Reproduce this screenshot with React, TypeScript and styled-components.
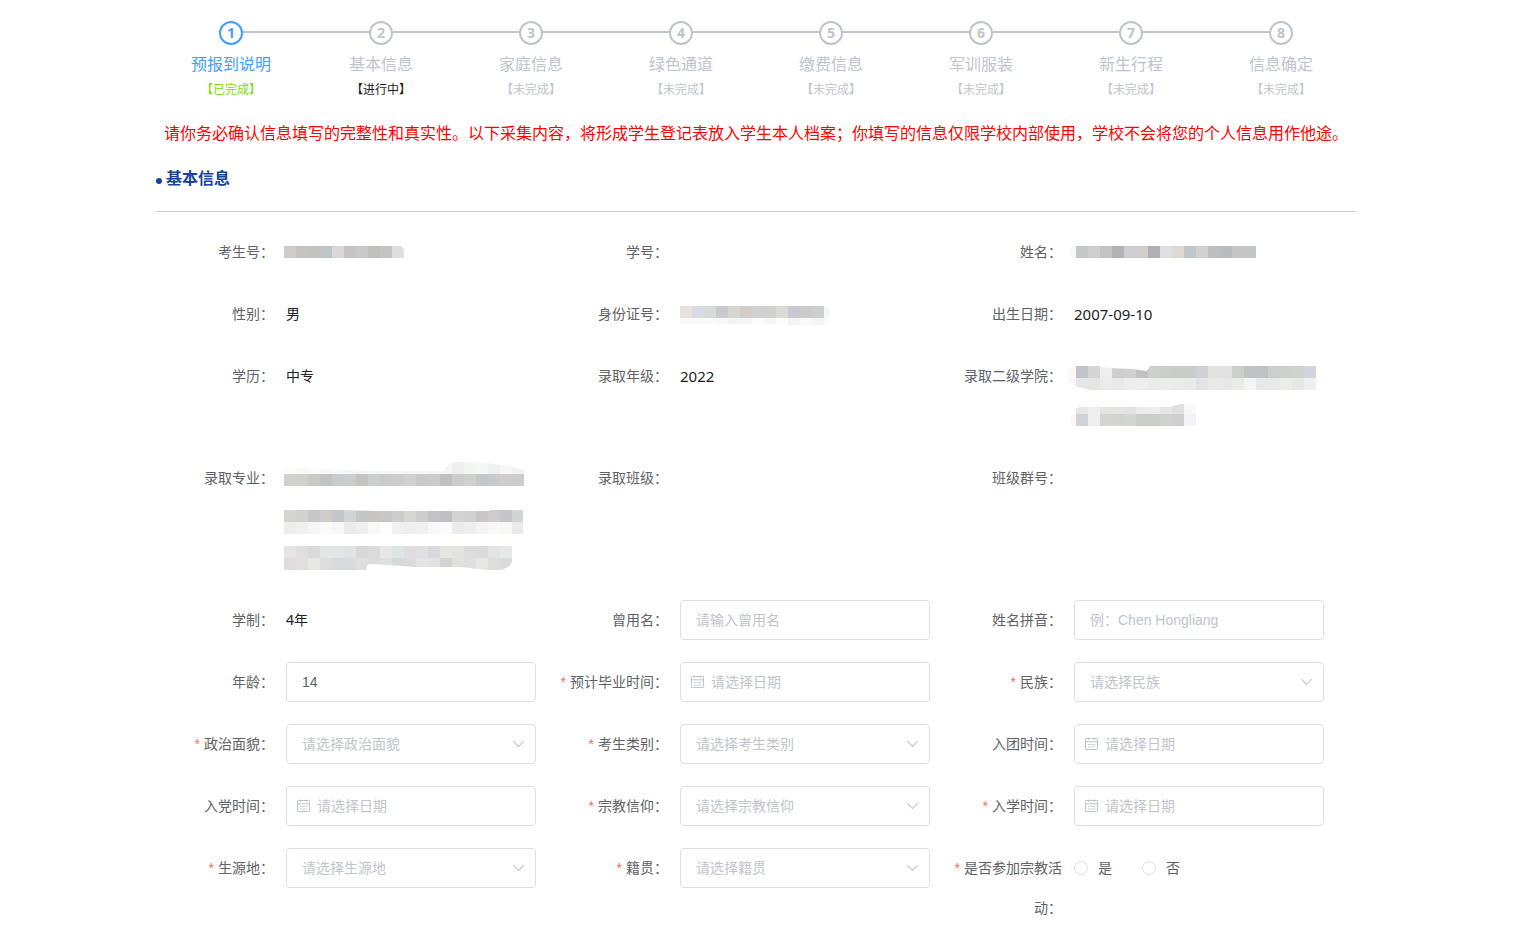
import React, { useId } from 'react';
import styled, { createGlobalStyle } from 'styled-components';

const GlobalStyle = createGlobalStyle`
  *, *::before, *::after { box-sizing: border-box; }
  body {
    margin: 0;
    background: #fff;
    color: #303133;
    font-family: 'Noto Sans', 'Noto Sans CJK SC', sans-serif;
    font-size: 14px;
  }
`;

const Page = styled.div`
  padding: 21px 16px 0 0;
`;

const Container = styled.main`
  max-width: 1200px;
  margin: 0 auto;
`;

/* ---------- steps ---------- */

type StepState = 'done' | 'active' | 'todo';

const titleColor = { done: '#409eff', active: '#c0c4cc', todo: '#c0c4cc' };
const statusColor = { done: '#7fdb0f', active: '#222222', todo: '#c0c4cc' };

const StepList = styled.ol`
  display: flex;
  margin: 0;
  padding: 0;
  list-style: none;
`;

const StepItem = styled.li`
  flex: 1;
  display: flex;
  flex-direction: column;
  align-items: center;
`;

const StepHead = styled.div`
  align-self: stretch;
  display: flex;
  align-items: center;
`;

const StepLine = styled.span<{ $hidden?: boolean }>`
  flex: 1;
  height: 2px;
  margin-bottom: 2px;
  background: ${(p) => (p.$hidden ? 'transparent' : '#c0c4cc')};
`;

const StepCircle = styled.span<{ $state: StepState }>`
  width: 24px;
  height: 24px;
  border: 2px solid;
  border-radius: 50%;
  color: ${(p) => titleColor[p.$state]};
  font-size: 14px;
  font-weight: 700;
  line-height: 20px;
  text-align: center;
`;

const StepTitle = styled.span<{ $state: StepState }>`
  color: ${(p) => titleColor[p.$state]};
  font-size: 16px;
  line-height: 38px;
`;

const StepStatus = styled.span<{ $state: StepState }>`
  color: ${(p) => statusColor[p.$state]};
  font-size: 12px;
  line-height: 14px;
`;

const steps: { title: string; status: string; state: StepState }[] = [
  { title: '预报到说明', status: '【已完成】', state: 'done' },
  { title: '基本信息', status: '【进行中】', state: 'active' },
  { title: '家庭信息', status: '【未完成】', state: 'todo' },
  { title: '绿色通道', status: '【未完成】', state: 'todo' },
  { title: '缴费信息', status: '【未完成】', state: 'todo' },
  { title: '军训服装', status: '【未完成】', state: 'todo' },
  { title: '新生行程', status: '【未完成】', state: 'todo' },
  { title: '信息确定', status: '【未完成】', state: 'todo' },
];

/* ---------- headings ---------- */

const Notice = styled.p`
  margin: 23px 0 0;
  color: #ff0000;
  font-family: 'Noto Sans CJK SC', sans-serif;
  font-size: 16px;
  line-height: 24px;
  text-align: center;
`;

const SectionTitle = styled.h2`
  display: flex;
  align-items: center;
  gap: 4px;
  margin: 22px 0 0;
  padding-bottom: 21px;
  border-bottom: 1px solid #d0d0d0;
  color: #17449b;
  font-size: 16px;
  font-weight: 700;
  line-height: 24px;

  &::before {
    content: '';
    width: 6px;
    height: 6px;
    margin-top: 5px;
    border-radius: 50%;
    background: #17449b;
  }
`;

/* ---------- form ---------- */

const Form = styled.form`
  display: grid;
  grid-template-columns: repeat(3, 1fr);
  row-gap: 22px;
  padding: 20px 8px 0 10px;
`;

const Item = styled.div`
  display: flex;
  align-items: flex-start;
  line-height: 40px;
`;

const labelText = `
  flex: none;
  width: 120px;
  padding-right: 12px;
  color: #606266;
  text-align: right;
`;

const Label = styled.label`${labelText}`;
const Caption = styled.span`${labelText}`;

const Star = styled.span`
  margin-right: 4px;
  color: #f56c6c;
  font-family: 'Liberation Sans', sans-serif;
`;

const Value = styled.span<{ $numeric?: boolean }>`
  color: #222;
  font-size: ${(p) => (p.$numeric ? 15 : 14)}px;
`;

const Field = styled.div`
  position: relative;
  flex: 0 1 250px;
  height: 40px;
`;

const control = `
  display: block;
  width: 100%;
  height: 40px;
  border: 1px solid #dcdfe6;
  border-radius: 4px;
  outline: none;
  background: #fff;
  font-family: 'Liberation Sans', 'Noto Sans CJK SC', sans-serif;
  font-size: 14px;
`;

const TextInput = styled.input<{ $icon?: boolean }>`
  ${control}
  padding: 0 15px 0 ${(p) => (p.$icon ? 30 : 15)}px;
  color: #606266;
  &::placeholder { color: #c0c4cc; opacity: 1; }
`;

const Select = styled.select`
  ${control}
  padding: 0 30px 0 15px;
  color: #c0c4cc;
  appearance: none;
`;

const Icon = styled.svg<{ $side: 'left' | 'right' }>`
  position: absolute;
  top: 13px;
  ${(p) => p.$side}: 10px;
  width: 14px;
  height: 14px;
  fill: none;
  stroke: #c0c4cc;
  pointer-events: none;
`;

const RadioGroup = styled.div`
  display: flex;
  gap: 30px;
`;

const RadioLabel = styled.label`
  display: flex;
  align-items: center;
  gap: 10px;
  color: #606266;
`;

const Radio = styled.input`
  width: 14px;
  height: 14px;
  margin: 0;
  border: 1px solid #dcdfe6;
  border-radius: 50%;
  appearance: none;
  &:checked { border: 4px solid #409eff; }
`;

const ChevronIcon = () => (
  <Icon $side="right" viewBox="0 0 14 14" aria-hidden="true">
    <path d="M1.3 4.2 6.5 9.4l5.2-5.2" strokeWidth="1.1" />
  </Icon>
);

const CalendarIcon = () => (
  <Icon $side="left" viewBox="0 0 14 14" aria-hidden="true">
    <rect x="1.5" y="1.5" width="12" height="11" rx="0.6" />
    <path d="M1.5 4.8h12M4.5 0.6v2.2M10.5 0.6v2.2" />
    <path d="M3.8 7.5h2M6.5 7.5h2M9.2 7.5h2M3.8 10h2M6.5 10h2M9.2 10h2" strokeWidth="0.9" />
  </Icon>
);

/* ---------- masked values ---------- */

const MaskSvg = styled.svg`
  display: block;
  flex: none;
  margin-left: -6px;
`;

interface Band {
  x: number;
  y: number;
  h?: number;
  colors: string;
}

interface Mask {
  height: number;
  outline: string;
  bands: Band[];
}

const CELL = 12;

const Mosaic = ({ mask }: { mask: Mask }) => {
  const id = useId();
  return (
    <MaskSvg width="256" height={mask.height} viewBox={`0 0 256 ${mask.height}`} role="img" aria-label="已隐藏">
      <clipPath id={id}>
        <path d={mask.outline} />
      </clipPath>
      <g clipPath={`url(#${id})`} shapeRendering="crispEdges">
        {mask.bands.map((band) =>
          band.colors.split(' ').map((c, i) => (
            <rect
              key={`${band.y}-${i}`}
              x={band.x + i * CELL}
              y={band.y}
              width={CELL}
              height={band.h ?? CELL}
              fill={`#${c}`}
            />
          )),
        )}
      </g>
    </MaskSvg>
  );
};

const masks: Record<string, Mask> = {
  examNo: {
    height: 40,
    outline: 'M4 14H121Q124 16 124 19V26H4Z',
    bands: [{ x: 4, y: 14, colors: 'd0cccc c3c3c0 c2c2c0 bfc5c5 d8d8d8 c5c3c4 c8cac9 c0bfbd c3c3c3 dedede' }],
  },
  idNo: {
    height: 40,
    outline: 'M6 12H152Q156 14 156 19Q156 28 149 31Q140 32 118 31L112 30H6Z',
    bands: [
      { x: 6, y: 12, colors: 'e7e2df d9dce5 d9dada cacaca d5d5d2 d2cdc9 cfd1d5 d0d0ce dadad8 c9cacf cbcbcb cdced1 f6f7f9' },
      { x: 6, y: 24, colors: 'fafafa f9f9f9 fafafa f8f8f8 f4f4f4 f5f5f5 fdfdfd f6f6f6 fdfdfd f4f4f4 fafafa f5f5f5 fbfbfb' },
    ],
  },
  name: {
    height: 40,
    outline: 'M8 14H188V26H4Q-1 20 4 14Z',
    bands: [
      { x: -4, y: 14, colors: 'f8f7f6 c6c8c8 cdcecd c2c4c3 b4b2b3 cecdd1 d2cecc aeb0b4 dfdfde ded9d2 c1c6c9 d1d1cf bcbdbf b8bcbd c6c6c5 c5c6c9' },
    ],
  },
  college: {
    height: 80,
    outline:
      'M4 10H30L42 12L64 13L79 15L82 10H248V34H24Q16 33 10 31Q0 28 0 20Q0 12 4 10ZM14 51H102L112 48Q118 47 122 49H128V70H5Q0 63 6 55Q9 51 14 51Z',
    bands: [
      { x: -4, y: 10, colors: 'faf9f7 c2c3c8 d6d4d5 eeeeee cfcdce d1d0d0 c1c1c1 cdcfce cacdca caccca cacccc d1d0d5 e2e2e2 e2e2e2 cecece c1c2c4 c2c1c1 cdcfce cecfcf d0d1ce d4d4de' },
      { x: -4, y: 22, colors: 'f9f8f5 e5e6e8 e5e5e4 ebebeb e9e9e9 ededed eeeeee eaecec ececec ebebeb eaeae9 e2e3e5 eaeaea e8e8e8 eaecea f4f6f6 e8e8e7 e8e9e8 ecedeb e7e9e8 efefef' },
      { x: -4, y: 46, colors: 'fdf9f4 e6e6e6 eeeeec e5e4e3 e5e5e5 e2e2e2 ebebeb ededed e5e5e5 dfdfdf f8f8fb' },
      { x: -4, y: 58, colors: 'fdf8f1 cfd2d7 eeeeee d4d4d3 d3d3d2 d3d5d3 cbcdca cccccb cfd2d0 cecece f3f3f8' },
    ],
  },
  major: {
    height: 120,
    outline:
      'M4 11Q14 8 34 10L90 13L163 13Q168 5 176 4H194L224 7L244 12V28H4ZM4 52H62L95 53H210V52H243V76H4ZM4 88H232V104Q229 110 220 112H207L180 109L135 109L110 107L88 106L86 112H4Z',
    bands: [
      { x: 4, y: 4, colors: 'fdfdfd fafafa fbfbfb f8f8f8 fafafa f6f6f6 f4f4f4 f7f7f7 f8f8f8 f8f8f8 f6f6f6 f8f8f8 f7f7f7 f5f5f5 efefef f5f5f5 f7f7f7 f0f0f0 f7f7f7 f3f3f3' },
      { x: 4, y: 16, colors: 'd1cfd0 d1d1cc cacac5 c1c4c5 cacbcd cccdcf c3c4bf cccfcd cbcacd cecdcb d0d1d1 c9c9ca cacccb c4bfbf ccccce d0d0cc c3c8cc cac9cd cecdcc cccccd' },
      { x: 4, y: 52, colors: 'd4d4d0 d1d1d0 c8c7c9 cdcccb c5c6c9 d1d4d4 c7c6c7 c8c5c4 c8c6c6 cbcecd d6d6d3 cdcdcb c3c2c8 c0bfc1 d2d3d2 d0d0cf c8c6c8 cdcccb c5c6c8 d0d4d4' },
      { x: 4, y: 64, colors: 'ededec f0f0f0 f6f6f6 fafafa f9f7f4 eaecec efefef f8f8f8 fdfdfd f1f1f1 efefef f0f0f1 f8f8f8 fbfbfb eaecea efefef f4f4f4 f9f9f9 f9f6f4 e9ebea' },
      { x: 4, y: 88, colors: 'e5e4e3 dededf dadadb e4e6e5 e5e5e5 e1e2e3 d8d7d8 dcdbdb e8e8e4 dfe4e6 dedddf e0e0e2 d9d9d9 e6e5e2 e3e3e3 dcdbdf dadada e1e4e3 e7e8e8' },
      { x: 4, y: 100, colors: 'dfdedd dfdee0 e7e8e5 dddddd d9dadb d9dbda dfdfdf dddddd dfdfe1 d5dadb dbdbdf e5e5e3 e2e2e1 d4d5d2 e0e0df dfdee0 e7e7e3 dddddd dadada' },
    ],
  },
};

/* ---------- fields ---------- */

type Kind = 'text' | 'date' | 'select' | 'radio' | 'value' | 'mask' | 'empty';

interface FieldDef {
  label: string;
  kind: Kind;
  text?: string;
  value?: string;
  required?: boolean;
  numeric?: boolean;
}

const fields: FieldDef[] = [
  { label: '考生号', kind: 'mask', value: 'examNo' },
  { label: '学号', kind: 'empty' },
  { label: '姓名', kind: 'mask', value: 'name' },
  { label: '性别', kind: 'value', value: '男' },
  { label: '身份证号', kind: 'mask', value: 'idNo' },
  { label: '出生日期', kind: 'value', value: '2007-09-10', numeric: true },
  { label: '学历', kind: 'value', value: '中专' },
  { label: '录取年级', kind: 'value', value: '2022', numeric: true },
  { label: '录取二级学院', kind: 'mask', value: 'college' },
  { label: '录取专业', kind: 'mask', value: 'major' },
  { label: '录取班级', kind: 'empty' },
  { label: '班级群号', kind: 'empty' },
  { label: '学制', kind: 'value', value: '4年' },
  { label: '曾用名', kind: 'text', text: '请输入曾用名' },
  { label: '姓名拼音', kind: 'text', text: '例：Chen Hongliang' },
  { label: '年龄', kind: 'text', value: '14' },
  { label: '预计毕业时间', kind: 'date', text: '请选择日期', required: true },
  { label: '民族', kind: 'select', text: '请选择民族', required: true },
  { label: '政治面貌', kind: 'select', text: '请选择政治面貌', required: true },
  { label: '考生类别', kind: 'select', text: '请选择考生类别', required: true },
  { label: '入团时间', kind: 'date', text: '请选择日期' },
  { label: '入党时间', kind: 'date', text: '请选择日期' },
  { label: '宗教信仰', kind: 'select', text: '请选择宗教信仰', required: true },
  { label: '入学时间', kind: 'date', text: '请选择日期', required: true },
  { label: '生源地', kind: 'select', text: '请选择生源地', required: true },
  { label: '籍贯', kind: 'select', text: '请选择籍贯', required: true },
  { label: '是否参加宗教活动', kind: 'radio', required: true },
];

const FormItem = ({ def }: { def: FieldDef }) => {
  const id = useId();
  const caption = (
    <>
      {def.required && <Star>*</Star>}
      {`${def.label}：`}
    </>
  );

  switch (def.kind) {
    case 'text':
    case 'date':
      return (
        <Item>
          <Label htmlFor={id}>{caption}</Label>
          <Field>
            <TextInput
              id={id}
              type="text"
              $icon={def.kind === 'date'}
              placeholder={def.text}
              defaultValue={def.value}
            />
            {def.kind === 'date' && <CalendarIcon />}
          </Field>
        </Item>
      );
    case 'select':
      return (
        <Item>
          <Label htmlFor={id}>{caption}</Label>
          <Field>
            <Select id={id} defaultValue="">
              <option value="">{def.text}</option>
            </Select>
            <ChevronIcon />
          </Field>
        </Item>
      );
    case 'radio':
      return (
        <Item>
          <Caption id={id}>{caption}</Caption>
          <RadioGroup role="radiogroup" aria-labelledby={id}>
            {['是', '否'].map((option) => (
              <RadioLabel key={option}>
                <Radio type="radio" name="religious-activity" value={option} />
                {option}
              </RadioLabel>
            ))}
          </RadioGroup>
        </Item>
      );
    default:
      return (
        <Item>
          <Caption>{caption}</Caption>
          {def.kind === 'mask' && <Mosaic mask={masks[def.value!]} />}
          {def.kind === 'value' && <Value $numeric={def.numeric}>{def.value}</Value>}
        </Item>
      );
  }
};

export default function App() {
  return (
    <Page lang="zh-CN">
      <GlobalStyle />
      <Container>
        <StepList>
          {steps.map((step, i) => (
            <StepItem key={step.title}>
              <StepHead>
                <StepLine $hidden={i === 0} />
                <StepCircle $state={step.state}>{i + 1}</StepCircle>
                <StepLine $hidden={i === steps.length - 1} />
              </StepHead>
              <StepTitle $state={step.state}>{step.title}</StepTitle>
              <StepStatus $state={step.state}>{step.status}</StepStatus>
            </StepItem>
          ))}
        </StepList>
        <Notice>
          请你务必确认信息填写的完整性和真实性。以下采集内容，将形成学生登记表放入学生本人档案；你填写的信息仅限学校内部使用，学校不会将您的个人信息用作他途。
        </Notice>
        <SectionTitle>基本信息</SectionTitle>
        <Form onSubmit={(e) => e.preventDefault()}>
          {fields.map((def) => (
            <FormItem key={def.label} def={def} />
          ))}
        </Form>
      </Container>
    </Page>
  );
}
